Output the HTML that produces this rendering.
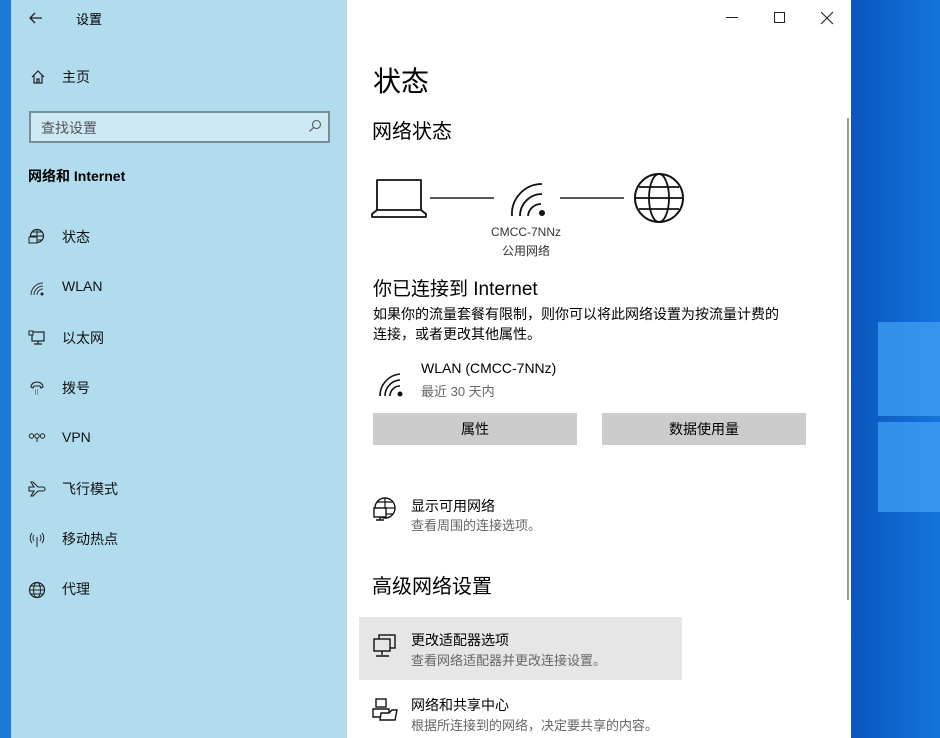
<!DOCTYPE html>
<html><head><meta charset="utf-8"><style>
*{margin:0;padding:0;box-sizing:border-box}
body{width:940px;height:738px;overflow:hidden;position:relative;background:#0b63cc;font-family:"Liberation Sans","Noto Sans CJK SC",sans-serif;color:#000}
.desk{position:absolute;left:851px;top:0;width:89px;height:738px;background:linear-gradient(90deg,#0a56bd,#1473dc)}
.tile{position:absolute;background:#3d9cf0;opacity:.8}
.lstrip{position:absolute;left:0;top:0;width:11px;height:738px;background:#1a78d6}
.side{position:absolute;left:11px;top:0;width:336px;height:738px;background:#b0dcee}
.main{position:absolute;left:347px;top:0;width:504px;height:738px;background:#fff}
.t{position:absolute;white-space:nowrap}
svg{position:absolute;overflow:visible}
.nav{font-size:14px;color:#111}
.btn{position:absolute;top:413px;width:204px;height:32px;background:#ccc;font-size:14px;text-align:center;line-height:32px}
.sub{color:#666;font-size:13px}
</style></head><body>
<div class="lstrip"></div>
<div class="desk"></div>
<div class="tile" style="left:878px;top:322px;width:62px;height:94px"></div>
<div class="tile" style="left:878px;top:422px;width:62px;height:90px"></div>
<div class="side"></div>
<div class="main"></div>

<svg style="left:28px;top:10px" width="16" height="16"><path d="M14 8H2M7 3L2 8l5 5" stroke="#222" stroke-width="1.3" fill="none"/></svg>
<div class="t" style="left:76px;top:9px;font-size:13px">设置</div>
<svg style="left:30px;top:69px" width="16" height="16"><path d="M2 8L8 2l6 6M4 6v8h8V6M7 14v-4h2v4" stroke="#222" stroke-width="1.2" fill="none"/></svg>
<div class="t nav" style="left:62px;top:67px">主页</div>
<div style="position:absolute;left:29px;top:111px;width:301px;height:32px;border:2px solid #7a8e98;background:#cde9f4"></div>
<div class="t" style="left:41px;top:118px;font-size:14px;color:#555">查找设置</div>
<svg style="left:308px;top:119px" width="14" height="14"><circle cx="8.5" cy="5.5" r="4" stroke="#555" fill="none" stroke-width="1.1"/><path d="M5.5 8.5L1.5 12.5" stroke="#555" stroke-width="1.2"/></svg>
<div class="t" style="left:28px;top:166px;font-size:14px;font-weight:bold">网络和 Internet</div>

<svg style="left:28px;top:228px" width="18" height="18"><circle cx="9" cy="8" r="6.5" stroke="#222" fill="none" stroke-width="1.2"/><path d="M2.5 8h13M9 1.5v13M4 4h10M4 12h10" stroke="#222" stroke-width="1"/><rect x="1" y="9" width="8" height="6" fill="#b0dcee" stroke="#222"/></svg>
<div class="t nav" style="left:62px;top:227px">状态</div>
<svg style="left:29px;top:280px" width="16" height="16"><path d="M2 15a12 12 0 0 1 12-12M5 15a9 9 0 0 1 9-9M8 15a6 6 0 0 1 6-6" stroke="#333" fill="none" stroke-width="1"/><circle cx="13" cy="14" r="1.5" fill="#222"/></svg>
<div class="t nav" style="left:62px;top:278px">WLAN</div>
<svg style="left:28px;top:330px" width="18" height="16"><rect x="4" y="2" width="12" height="9" stroke="#222" fill="none" stroke-width="1.2"/><rect x="1" y="1" width="4" height="4" fill="#b0dcee" stroke="#222"/><path d="M10 11v3M6 14h8" stroke="#222" stroke-width="1.2"/></svg>
<div class="t nav" style="left:62px;top:328px">以太网</div>
<svg style="left:29px;top:380px" width="16" height="16"><path d="M2 7a6 5 0 0 1 12 0l-2 1-1-2H5l-1 2z" stroke="#222" fill="none" stroke-width="1.1"/><path d="M6 10h4M6 12h4M6 14h4" stroke="#444" stroke-dasharray="1 1"/></svg>
<div class="t nav" style="left:62px;top:378px">拨号</div>
<svg style="left:28px;top:432px" width="18" height="14"><circle cx="3.5" cy="4" r="2.2" stroke="#222" fill="none"/><circle cx="9" cy="4" r="2.2" stroke="#222" fill="none"/><circle cx="14.5" cy="4" r="2.2" stroke="#222" fill="none"/><path d="M9 6v4" stroke="#222"/></svg>
<div class="t nav" style="left:62px;top:429px">VPN</div>
<svg style="left:28px;top:481px" width="18" height="16"><path d="M1 6h5L3 1h2l5 5h5a2 2 0 0 1 0 4h-5l-5 5H3l3-5H1z" stroke="#222" fill="none" stroke-width="1.1"/></svg>
<div class="t nav" style="left:62px;top:479px">飞行模式</div>
<svg style="left:28px;top:531px" width="18" height="16"><path d="M4 2a8 8 0 0 0 0 10M14 2a8 8 0 0 1 0 10M6 4a5 5 0 0 0 0 6M12 4a5 5 0 0 1 0 6M9 6v10" stroke="#222" fill="none" stroke-width="1"/></svg>
<div class="t nav" style="left:62px;top:529px">移动热点</div>
<svg style="left:28px;top:581px" width="18" height="18"><circle cx="9" cy="9" r="7.5" stroke="#222" fill="none" stroke-width="1.2"/><ellipse cx="9" cy="9" rx="3.5" ry="7.5" stroke="#222" fill="none"/><path d="M1.5 9h15M3 5h12M3 13h12" stroke="#222"/></svg>
<div class="t nav" style="left:62px;top:579px">代理</div>

<div class="t" style="left:726px;top:17px;width:12px;border-top:1px solid #222"></div>
<div style="position:absolute;left:774px;top:12px;width:11px;height:11px;border:1px solid #222"></div>
<svg style="left:821px;top:12px" width="12" height="12"><path d="M0 0L12 12M12 0L0 12" stroke="#222" stroke-width="1.1"/></svg>
<div style="position:absolute;left:847px;top:118px;width:2px;height:482px;background:#999"></div>

<div class="t" style="left:373px;top:60px;font-size:28px">状态</div>
<div class="t" style="left:372px;top:115px;font-size:20px">网络状态</div>
<svg style="left:372px;top:178px" width="320" height="50">
<path d="M5 2h44v30H5zM0 36l5-4h44l5 4v3H0z" stroke="#111" fill="none" stroke-width="1.8" stroke-linejoin="round"/>
<path d="M58 20h64M188 20h64" stroke="#222" stroke-width="1.6"/>
<path d="M140 38a30 30 0 0 1 30-32M148 38a22 22 0 0 1 22-22M156 38a13 13 0 0 1 13-12" stroke="#111" fill="none" stroke-width="1.8"/><circle cx="170" cy="35" r="3" fill="#111"/>
<circle cx="287" cy="20" r="24" stroke="#111" fill="none" stroke-width="2"/><ellipse cx="287" cy="20" rx="10" ry="24" stroke="#111" fill="none" stroke-width="1.8"/><path d="M263 20h48M267 9h40M267 31h40" stroke="#111" stroke-width="1.8"/>
</svg>
<div class="t" style="left:491px;top:225px;font-size:12px;color:#333">CMCC-7NNz</div>
<div class="t" style="left:502px;top:242px;font-size:12px;color:#333">公用网络</div>
<div class="t" style="left:373px;top:274px;font-size:19px">你已连接到 Internet</div>
<div class="t" style="left:373px;top:304px;font-size:14px;line-height:20px">如果你的流量套餐有限制，则你可以将此网络设置为按流量计费的<br>连接，或者更改其他属性。</div>
<svg style="left:378px;top:370px" width="28" height="28"><path d="M2 26a22 22 0 0 1 20-22M7 26a16 16 0 0 1 15-16M12 26a10 10 0 0 1 10-10" stroke="#111" fill="none" stroke-width="1.6"/><circle cx="22" cy="24" r="2.5" fill="#111"/></svg>
<div class="t" style="left:421px;top:360px;font-size:14px">WLAN (CMCC-7NNz)</div>
<div class="t sub" style="left:421px;top:381px">最近 30 天内</div>
<div class="btn" style="left:373px">属性</div>
<div class="btn" style="left:602px">数据使用量</div>

<svg style="left:372px;top:496px" width="26" height="28"><circle cx="13" cy="12" r="10" stroke="#111" fill="none" stroke-width="1.4"/><path d="M3 12h20M13 2v20M5 6h16M5 18h16" stroke="#111" stroke-width="1.2"/><rect x="2" y="12" width="12" height="9" fill="#fff" stroke="#111" stroke-width="1.4"/><path d="M8 21v3M4 24h8" stroke="#111" stroke-width="1.4"/></svg>
<div class="t" style="left:411px;top:496px;font-size:14px">显示可用网络</div>
<div class="t sub" style="left:411px;top:515px">查看周围的连接选项。</div>
<div class="t" style="left:372px;top:570px;font-size:20px">高级网络设置</div>
<div style="position:absolute;left:359px;top:617px;width:323px;height:63px;background:#e6e6e6"></div>
<svg style="left:372px;top:633px" width="26" height="26"><rect x="7" y="2" width="16" height="13" stroke="#111" fill="#e6e6e6" stroke-width="1.4"/><rect x="2" y="6" width="16" height="12" stroke="#111" fill="#e6e6e6" stroke-width="1.4"/><path d="M10 18v4M4 23h13" stroke="#111" stroke-width="1.4"/></svg>
<div class="t" style="left:411px;top:630px;font-size:14px">更改适配器选项</div>
<div class="t sub" style="left:411px;top:650px">查看网络适配器并更改连接设置。</div>
<svg style="left:372px;top:697px" width="28" height="28"><rect x="4" y="2" width="10" height="8" stroke="#111" fill="none" stroke-width="1.4"/><path d="M1 12h16v8H1z" stroke="#111" fill="#fff" stroke-width="1.4"/><path d="M9 16h8l3-3h5l-2 10H8z" stroke="#111" fill="#fff" stroke-width="1.4"/></svg>
<div class="t" style="left:411px;top:695px;font-size:14px">网络和共享中心</div>
<div class="t sub" style="left:411px;top:715px">根据所连接到的网络，决定要共享的内容。</div>
</body></html>
